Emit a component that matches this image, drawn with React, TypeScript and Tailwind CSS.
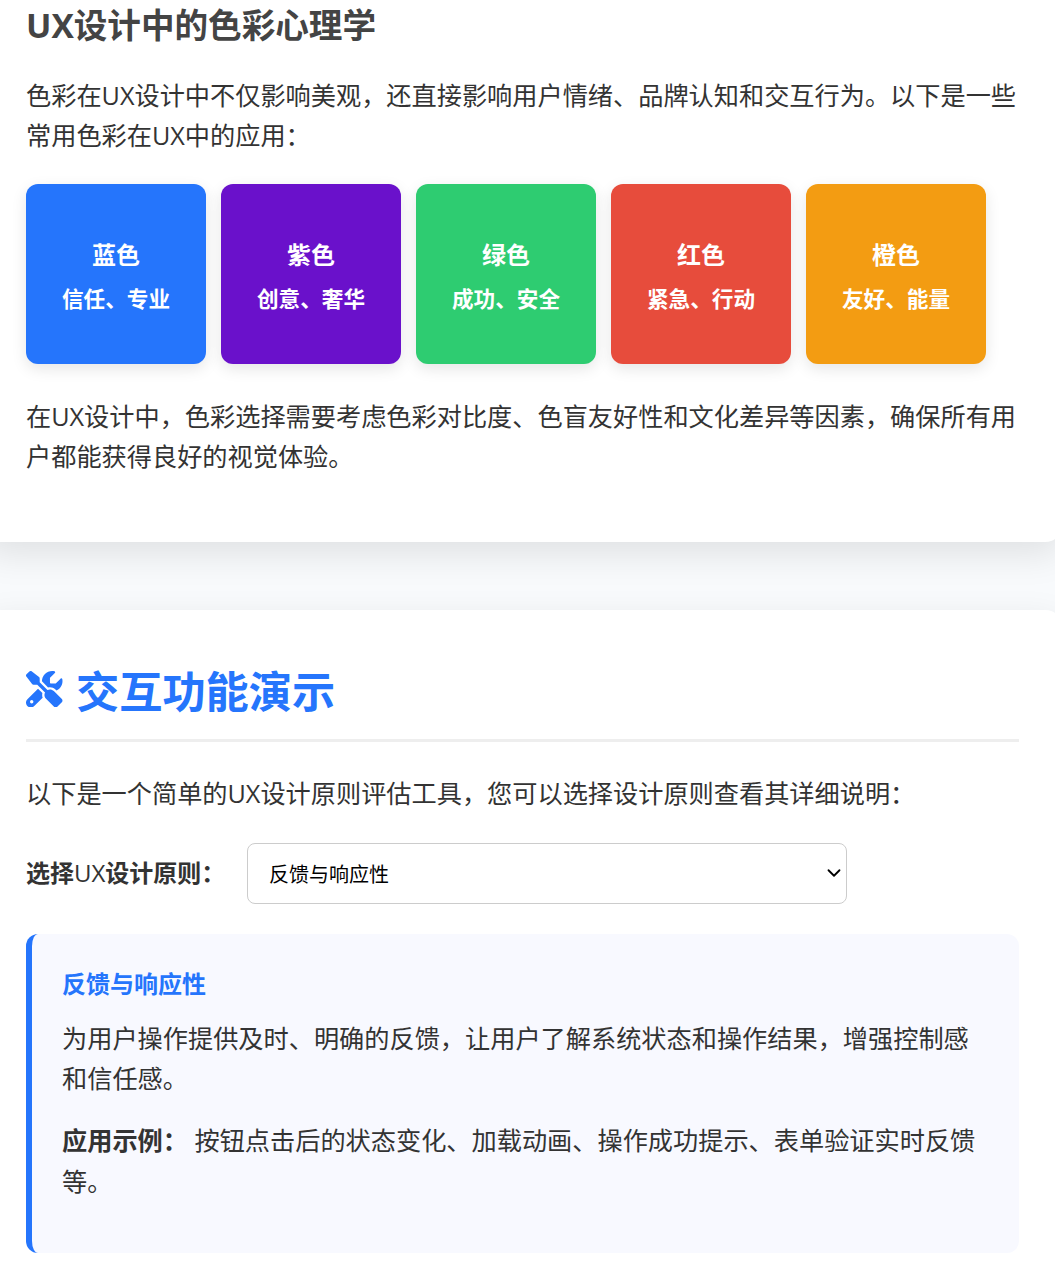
import { useState } from 'react';
import { ChevronDown } from 'lucide-react';
import { FaScrewdriverWrench } from 'react-icons/fa6';

const colors = [
  { name: '蓝色', meaning: '信任、专业', bg: 'bg-[#2575fc]' },
  { name: '紫色', meaning: '创意、奢华', bg: 'bg-[#6a11cb]' },
  { name: '绿色', meaning: '成功、安全', bg: 'bg-[#2ecc71]' },
  { name: '红色', meaning: '紧急、行动', bg: 'bg-[#e74c3c]' },
  { name: '橙色', meaning: '友好、能量', bg: 'bg-[#f39c12]' },
];

const principles = [
  {
    title: '反馈与响应性',
    description: '为用户操作提供及时、明确的反馈，让用户了解系统状态和操作结果，增强控制感和信任感。',
    example: '按钮点击后的状态变化、加载动画、操作成功提示、表单验证实时反馈等。',
  },
];

function ColorPsychology() {
  return (
    <section className="-mr-2 -ml-[18px] h-[542.4px] rounded-b-[18px] bg-white px-[44px] shadow-[0_12px_36px_rgba(0,0,0,0.1)]">
      <h3 className="h-[75px] text-[33.6px] leading-[51px] font-bold text-[#444]">UX设计中的色彩心理学</h3>
      <p>色彩在UX设计中不仅影响美观，还直接影响用户情绪、品牌认知和交互行为。以下是一些常用色彩在UX中的应用：</p>
      <div className="mt-[28.8px] mb-[31.4px] flex gap-[15px]">
        {colors.map((color) => (
          <div
            key={color.name}
            className={`flex size-[180px] flex-col items-center justify-center gap-[7px] rounded-xl pt-[4px] font-bold text-white shadow-[0_5px_15px_rgba(0,0,0,0.1)] ${color.bg}`}
          >
            <div className="text-2xl leading-[38px]">{color.name}</div>
            <div className="text-[21.6px] leading-[35px]">{color.meaning}</div>
          </div>
        ))}
      </div>
      <p>在UX设计中，色彩选择需要考虑色彩对比度、色盲友好性和文化差异等因素，确保所有用户都能获得良好的视觉体验。</p>
    </section>
  );
}

function PrincipleDemo() {
  const [selected, setSelected] = useState(0);
  const principle = principles[selected];

  return (
    <section className="-mr-2 -ml-[18px] mt-[67.6px] h-[760px] rounded-[18px] bg-white px-[44px] pt-[47px] shadow-[0_12px_36px_rgba(0,0,0,0.1)]">
      <h2 className="flex h-[85px] items-start border-b-[3px] border-[#eee] text-[43.2px] leading-[70px] font-bold text-[#2575fc]">
        <FaScrewdriverWrench className="mt-[14px] mr-[13.5px] size-[36.5px]" />
        交互功能演示
      </h2>
      <p className="mt-[31px]">以下是一个简单的UX设计原则评估工具，您可以选择设计原则查看其详细说明：</p>

      <div className="mt-[30px] flex items-center">
        <label htmlFor="principle" className="w-[221px] pb-px text-2xl font-bold">
          选择<span className="font-normal">UX</span>设计原则：
        </label>
        <div className="relative">
          <select
            id="principle"
            value={selected}
            onChange={(e) => setSelected(Number(e.target.value))}
            className="block h-[61px] w-[600px] appearance-none rounded-lg border border-[#ccc] bg-white px-[21px] pt-[2px] text-xl text-black"
          >
            {principles.map((item, index) => (
              <option key={item.title} value={index}>{item.title}</option>
            ))}
          </select>
          <ChevronDown className="pointer-events-none absolute top-[19px] right-[2px] size-[22px] text-black" />
        </div>
      </div>

      <div className="mt-[30px] h-[319px] rounded-xl border-l-[6px] border-[#2575fc] bg-[#f8f9ff] px-[30px] pt-[30px]">
        <h4 className="text-2xl leading-[40px] font-bold text-[#2575fc]">{principle.title}</h4>
        <p className="mt-[13.5px]">{principle.description}</p>
        <p className="mt-[22px]">
          <strong>应用示例：</strong>
          <span> {principle.example}</span>
        </p>
      </div>
    </section>
  );
}

export default function App() {
  return (
    <div
      lang="zh-CN"
      className="h-[1265px] w-[1055px] overflow-hidden bg-[#f8fafc] font-['Open_Sans','Noto_Sans_CJK_SC',sans-serif] text-[25.2px] leading-[40.32px] text-[#333]"
    >
      <ColorPsychology />
      <PrincipleDemo />
    </div>
  );
}
